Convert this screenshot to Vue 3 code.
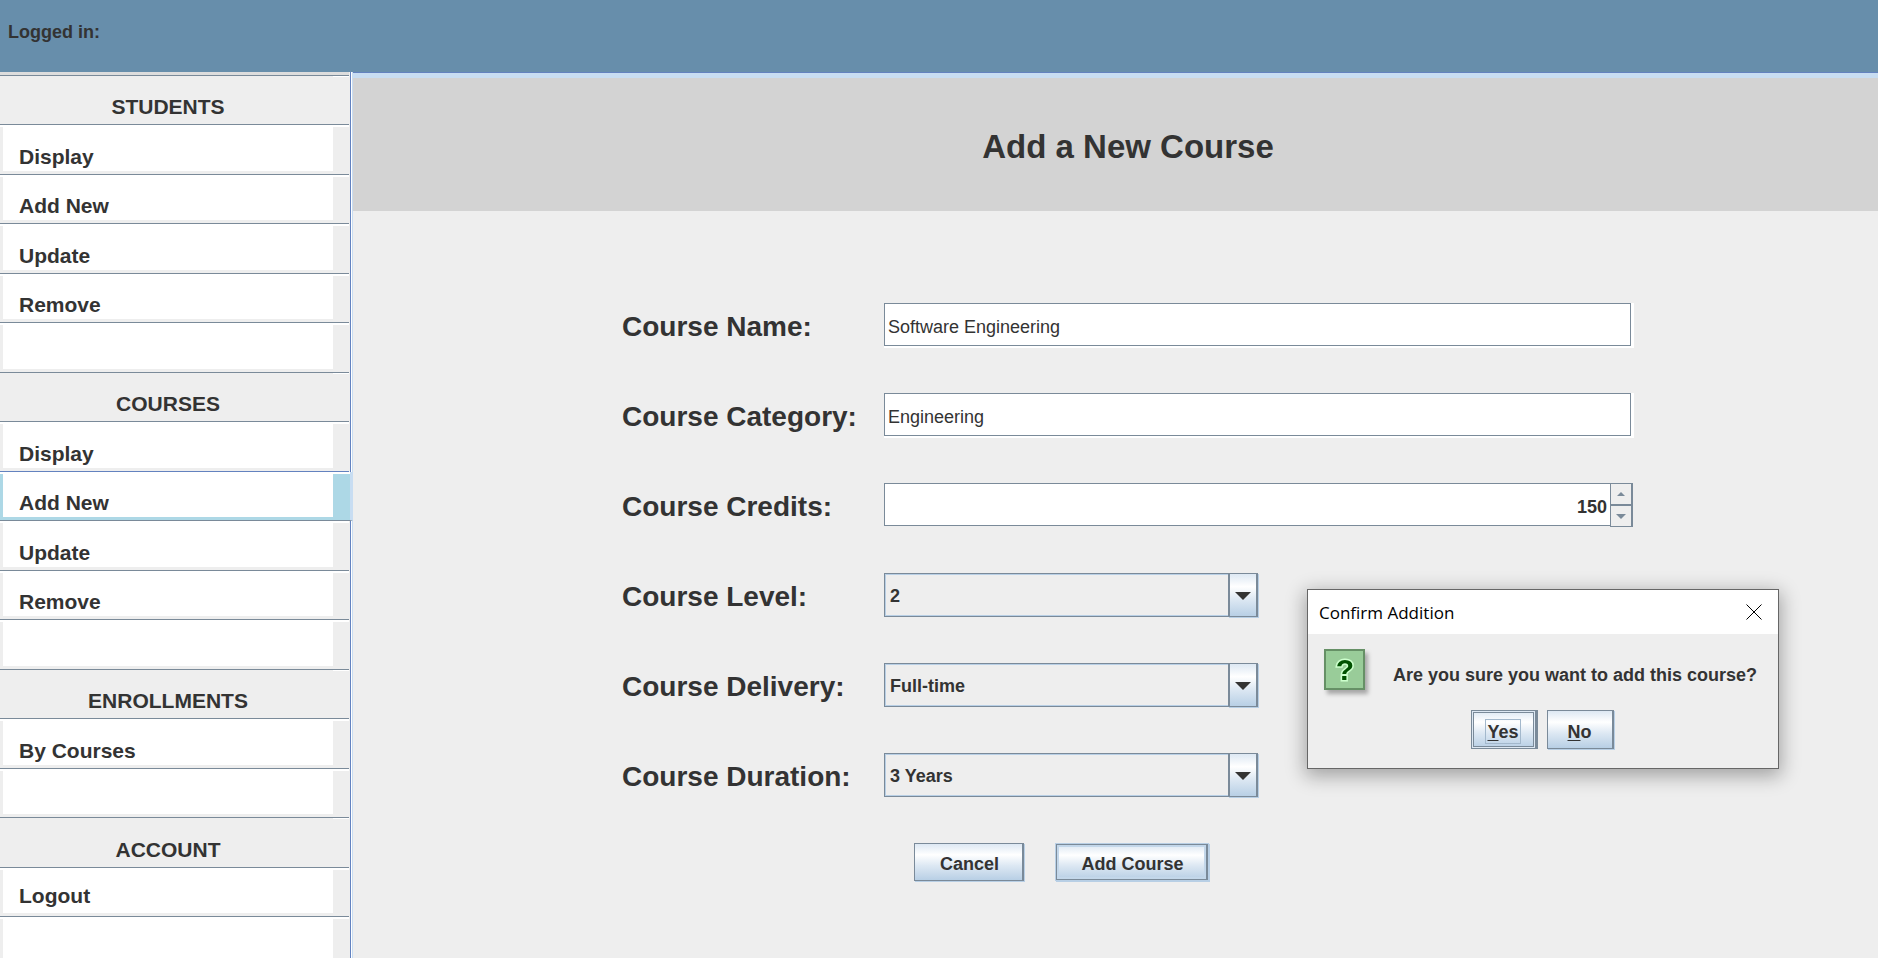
<script setup>
import { ref } from 'vue'

const rows = [
  { kind: 'head', text: 'STUDENTS' },
  { kind: 'link', text: 'Display' },
  { kind: 'link', text: 'Add New' },
  { kind: 'link', text: 'Update' },
  { kind: 'link', text: 'Remove' },
  { kind: 'blank' },
  { kind: 'head', text: 'COURSES' },
  { kind: 'link', text: 'Display' },
  { kind: 'link', text: 'Add New', active: true },
  { kind: 'link', text: 'Update' },
  { kind: 'link', text: 'Remove' },
  { kind: 'blank' },
  { kind: 'head', text: 'ENROLLMENTS' },
  { kind: 'link', text: 'By Courses' },
  { kind: 'blank' },
  { kind: 'head', text: 'ACCOUNT' },
  { kind: 'link', text: 'Logout', raised: true },
  { kind: 'blank' }
]

const name = ref('Software Engineering')
const category = ref('Engineering')
const credits = ref(150)

const choices = [
  { id: 'level', label: 'Course Level:', value: ref('2'), options: ['1', '2', '3'] },
  { id: 'delivery', label: 'Course Delivery:', value: ref('Full-time'), options: ['Full-time', 'Part-time'] },
  { id: 'duration', label: 'Course Duration:', value: ref('3 Years'), options: ['1 Year', '2 Years', '3 Years', '4 Years'] }
]
</script>

<template>
  <div class="app">
    <header class="topbar">Logged in:</header>

    <nav class="side">
      <ul>
        <li v-for="(row, i) in rows" :key="i" :class="[row.kind, { active: row.active }]">
          <h2 v-if="row.kind === 'head'">{{ row.text }}</h2>
          <a v-else-if="row.kind === 'link'" href="#" :class="{ raised: row.raised }">{{ row.text }}</a>
          <div v-else class="filler"></div>
        </li>
      </ul>
    </nav>

    <main class="main">
      <div class="title"><h1>Add a New Course</h1></div>

      <div class="form-area">
        <form class="form" @submit.prevent>
          <label for="name">Course Name:</label>
          <div class="field"><input id="name" v-model="name" type="text"></div>

          <label for="category">Course Category:</label>
          <div class="field"><input id="category" v-model="category" type="text"></div>

          <label for="credits">Course Credits:</label>
          <div class="spinner">
            <input id="credits" v-model="credits" type="number">
            <div class="steps">
              <button type="button" aria-label="Increase credits" @click="credits++">
                <svg width="8" height="4" viewBox="0 0 8 4"><path d="M4 0 8 4H0z" fill="#7a8a99" /></svg>
              </button>
              <button type="button" aria-label="Decrease credits" @click="credits--">
                <svg width="10" height="5" viewBox="0 0 10 5"><path d="M0 0h10L5 5z" fill="#7a8a99" /></svg>
              </button>
            </div>
          </div>

          <template v-for="c in choices" :key="c.id">
            <label :for="c.id">{{ c.label }}</label>
            <div class="combo">
              <select :id="c.id" v-model="c.value.value">
                <option v-for="o in c.options" :key="o">{{ o }}</option>
              </select>
              <span class="arrow" aria-hidden="true">
                <svg width="16" height="8" viewBox="0 0 16 8"><path d="M0 0h16L8 8z" fill="#333" /></svg>
              </span>
            </div>
          </template>

          <div class="actions">
            <button type="button" class="btn cancel">Cancel</button>
            <button type="submit" class="btn add">Add Course</button>
          </div>
        </form>
      </div>
    </main>

    <section class="dialog" role="dialog" aria-labelledby="dlg-title">
      <div class="dlg-bar">
        <span id="dlg-title">Confirm Addition</span>
        <button type="button" class="close" aria-label="Close">
          <svg width="16" height="16" viewBox="0 0 16 16"><path d="M.5.5l15 15M15.5.5l-15 15" stroke="#000" /></svg>
        </button>
      </div>
      <div class="dlg-body">
        <svg class="question" width="41" height="41" viewBox="0 0 41 41" aria-hidden="true">
          <rect x="1" y="1" width="39" height="39" fill="#99cc99" stroke="#669066" stroke-width="2" />
          <text x="21" y="31" text-anchor="middle" class="mark">?</text>
        </svg>
        <p>Are you sure you want to add this course?</p>
      </div>
      <div class="dlg-actions">
        <button type="button" class="btn yes"><span><u>Y</u>es</span></button>
        <button type="button" class="btn no"><span><u>N</u>o</span></button>
      </div>
    </section>
  </div>
</template>

<style>
body {
  margin: 0;
  overflow: hidden;
}
</style>

<style scoped>
* {
  box-sizing: border-box;
}

.app {
  position: relative;
  display: grid;
  grid-template-columns: 353px 1fr;
  grid-template-rows: 72px 1fr;
  height: 100vh;
  overflow: hidden;
  background: #eee;
  color: #333;
  font: bold 18px "Liberation Sans", Arial, sans-serif;
}

button,
input,
select {
  margin: 0;
  border-radius: 0;
  outline: none;
  color: #333;
  font: inherit;
}

.topbar {
  grid-column: 1 / -1;
  padding: 21px 8px;
  background: #678eab;
  line-height: 22px;
}

/* sidebar */
.side {
  min-height: 0;
  overflow: hidden;
  background: linear-gradient(to right, #eee 350px, #6382bf 350px 351px, #fff 351px 352px, #c8ddf2 352px);
}

ul {
  display: grid;
  grid-template-rows: 4px;
  grid-auto-rows: 49px 50px;
  margin: 0;
  padding: 0;
  list-style: none;
}

ul::before {
  content: "";
  height: 3px;
  margin-right: 4px;
  border-bottom: 1px solid #7a8a99;
  background: #ddd;
}

li {
  display: grid;
  margin-right: 4px;
  padding: 2px 16px 3px 3px;
  border-bottom: 1px solid #7a8a99;
  background: linear-gradient(#fff, #fff) top / 100% 2px no-repeat #eee;
}

li.head {
  background: linear-gradient(#fff, #fff) right top / 16px 1px no-repeat #eee;
}

li.active {
  margin-right: 0;
  padding-right: 17px;
  border-right: 3px solid #c8ddf2;
  background-color: #add8e6;
}

li:has(+ .active) {
  border-bottom-color: #6382bf;
}

li h2,
li a {
  display: flex;
  align-items: flex-end;
  margin: 0;
  padding-bottom: 2px;
  color: #333;
  font-size: 21px;
  font-weight: bold;
  line-height: 24px;
}

li h2 {
  justify-content: center;
}

li a {
  padding-left: 16px;
  background: #fff;
  text-decoration: none;
}

li a.raised {
  padding-bottom: 5px;
}

.filler {
  background: #fff;
}

/* main panel */
.main {
  min-width: 0;
  border-top: 1px solid #6382bf;
}

.title {
  height: 138px;
  padding-left: 25px;
  border-top: 5px solid #c8ddf2;
  background: #d3d3d3;
}

h1 {
  margin: 0;
  font-size: 33px;
  line-height: 138px;
  text-align: center;
}

.form-area {
  padding: 92px 0 0 25px;
}

.form {
  display: grid;
  grid-template-columns: 262px 1fr;
  grid-auto-rows: 45px;
  row-gap: 45px;
  width: 1012px;
  max-width: 100%;
  margin: 0 auto;
}

.form > label {
  font-size: 28px;
  line-height: 48px;
  white-space: nowrap;
}

.field {
  padding: 0 3px 2px 0;
  background: #fff;
}

.field input {
  display: block;
  width: 100%;
  height: 43px;
  padding: 6px 3px 0;
  border: 1px solid #7a8a99;
  background: #fff;
  font-weight: normal;
}

.spinner {
  display: flex;
  height: 44px;
  margin-right: 1px;
}

.spinner input {
  flex: 1;
  min-width: 0;
  height: 43px;
  padding: 6px 3px 0 0;
  border: 1px solid #7a8a99;
  border-right: 0;
  background: #fff;
  text-align: right;
  appearance: textfield;
}

.spinner input::-webkit-inner-spin-button {
  appearance: none;
}

.steps {
  display: grid;
  grid-template-rows: 22px 22px;
  width: 23px;
}

.steps button {
  display: flex;
  align-items: center;
  justify-content: center;
  padding: 0;
  border: 1px solid #7a8a99;
  border-right-width: 2px;
  background: #eee;
}

.combo {
  position: relative;
  width: 374px;
  height: 44px;
}

.combo select {
  width: 100%;
  height: 44px;
  padding: 2px 34px 0 5px;
  border: 1px solid #7a8a99;
  background: #eee;
  box-shadow: inset 0 0 0 1px #b8cfe5;
  appearance: none;
}

.arrow {
  position: absolute;
  top: 0;
  right: 0;
  display: flex;
  align-items: center;
  justify-content: center;
  width: 30px;
  height: 44px;
  padding-top: 2px;
  border: 1px solid #7a8a99;
  border-width: 1px 2px;
  background: linear-gradient(#dde8f3, #fff 30%, #dde8f3 60%, #b8cfe5);
  box-shadow: 1px 1px 0 #b8cfe5;
  pointer-events: none;
}

.actions {
  grid-column: 2;
  display: flex;
  align-items: flex-start;
  gap: 32px;
  padding-left: 30px;
}

.btn {
  height: 38px;
  padding: 4px 0 0 2px;
  border: 1px solid #7a8a99;
  border-right-width: 2px;
  background: linear-gradient(#dde8f3, #fff 30%, #dde8f3 60%, #b8cfe5);
  box-shadow: 1px 1px 0 #b8cfe5;
  white-space: nowrap;
}

.cancel {
  width: 110px;
}

.add {
  width: 152px;
  height: 36px;
  margin-top: 1px;
  box-shadow: inset 0 0 0 2px #c3d7ea, 0 0 0 1px #b8cfe5, 1px 1px 0 1px #b8cfe5;
}

/* confirmation window */
.dialog {
  position: absolute;
  top: 589px;
  left: 1307px;
  width: 472px;
  border: 1px solid #666;
  background: #eee;
  box-shadow: 0 5px 18px 2px rgba(0, 0, 0, 0.32);
}

.dlg-bar {
  display: flex;
  align-items: center;
  justify-content: space-between;
  height: 44px;
  padding: 0 16px 0 11px;
  background: #fff;
  color: #000;
  font: 17px "Open Sans", "Noto Sans", sans-serif;
}

.close {
  display: flex;
  padding: 0;
  border: 0;
  background: none;
}

.dlg-body {
  display: flex;
  gap: 28px;
  padding: 15px 16px 0;
}

.question {
  flex: none;
  filter: drop-shadow(3px 4px 2px rgba(0, 0, 0, 0.3));
}

.mark {
  fill: #005000;
  stroke: #ccffcc;
  stroke-width: 3px;
  paint-order: stroke;
  font: bold 30px "Liberation Sans", Arial, sans-serif;
}

.dlg-body p {
  margin: 16px 0 0;
  line-height: 20px;
  white-space: nowrap;
}

.dlg-actions {
  display: flex;
  justify-content: center;
  gap: 9px;
  padding: 20px 2px 19px 0;
}

.dlg-actions .btn {
  width: 67px;
  height: 39px;
  padding: 3px 0 0;
}

.dlg-actions .btn span {
  display: inline-block;
  padding: 2px 1px 0;
  border: 1px solid transparent;
}

.dlg-actions u {
  text-underline-offset: 2px;
  text-decoration-thickness: 1px;
}

.dlg-actions .yes {
  border-right-width: 3px;
  box-shadow: inset 0 0 0 1px #dde8f3, inset 0 0 0 2px #7a8a99;
}

.dlg-actions .yes span {
  border-color: #a3b8cc;
}
</style>
